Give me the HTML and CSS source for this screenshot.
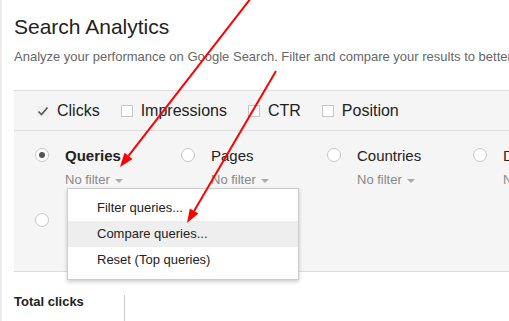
FILE: index.html
```html
<!DOCTYPE html>
<html lang="en">
  <head>
    <meta charset="UTF-8" />
    <title>Search Analytics</title>
    <link rel="stylesheet" href="styles.css">
  </head>
  <body>
    <div class="page">
      <h1>Search Analytics</h1>
      <p class="intro">Analyze your performance on Google Search. Filter and compare your results to better understand your traffic.</p>

      <div class="panel">
        <div class="metrics">
          <label class="metric">
            <span class="check checked">
              <svg width="12" height="12" viewBox="0 0 12 12"><path d="M1.5 6.5 L4.5 9.5 L10.5 2.5" fill="none" stroke="#555" stroke-width="1.6"/></svg>
            </span>Clicks
          </label>
          <label class="metric"><span class="check"></span>Impressions</label>
          <label class="metric"><span class="check"></span>CTR</label>
          <label class="metric"><span class="check"></span>Position</label>
        </div>

        <div class="groups">
          <div class="group-row">
            <div class="option">
              <span class="radio selected"></span>
              <div>
                <div class="option-name bold">Queries</div>
                <div class="filter">No filter<span class="caret"></span></div>
              </div>
            </div>
            <div class="option">
              <span class="radio"></span>
              <div>
                <div class="option-name">Pages</div>
                <div class="filter">No filter<span class="caret"></span></div>
              </div>
            </div>
            <div class="option">
              <span class="radio"></span>
              <div>
                <div class="option-name">Countries</div>
                <div class="filter">No filter<span class="caret"></span></div>
              </div>
            </div>
            <div class="option">
              <span class="radio"></span>
              <div>
                <div class="option-name">Devices</div>
                <div class="filter">No filter<span class="caret"></span></div>
              </div>
            </div>
          </div>
          <div class="group-row second">
            <div class="option">
              <span class="radio"></span>
            </div>
          </div>
        </div>
      </div>

      <div class="totals">
        <div class="total">Total clicks</div>
        <div class="total-chart"></div>
      </div>

      <ul class="menu">
        <li>Filter queries...</li>
        <li class="hover">Compare queries...</li>
        <li>Reset (Top queries)</li>
      </ul>

      <svg class="arrows" width="509" height="321" viewBox="0 0 509 321">
        <line x1="249" y1="-2" x2="126.5" y2="155.9" stroke="#f00" stroke-width="2"/>
        <polygon points="118,167 130.5,158.9 122.5,152.8" fill="#f00"/>
        <line x1="274" y1="71" x2="192.1" y2="210.9" stroke="#f00" stroke-width="2"/>
        <polygon points="185,223 196.4,213.4 187.8,208.4" fill="#f00"/>
      </svg>
    </div>
  </body>
</html>
```

FILE: styles.css
```css
body {
  margin: 0;
  font-family: "Liberation Sans", Arial, sans-serif;
  color: #222;
  background: #fff;
  overflow: hidden;
}
.page {
  position: relative;
  width: 509px;
  height: 321px;
  box-sizing: border-box;
  border-left: 2px solid #ececec;
  padding-left: 12px;
  overflow: hidden;
}
h1 {
  margin: 14px 0 0;
  font-size: 21px;
  line-height: 26px;
  font-weight: normal;
  color: #222;
}
.intro {
  margin: 9px 0 0;
  font-size: 13px;
  line-height: 16px;
  color: #666;
  white-space: nowrap;
}
.panel {
  margin-top: 25px;
  width: 600px;
  background: #f5f5f5;
  border-top: 1px solid #ddd;
  border-bottom: 1px solid #ddd;
}
.metrics {
  display: flex;
  align-items: center;
  height: 39px;
  padding-left: 23px;
  border-bottom: 1px solid #ddd;
  font-size: 16px;
}
.metric {
  display: flex;
  align-items: center;
  margin-right: 21px;
}
.check {
  display: inline-block;
  width: 12px;
  height: 12px;
  margin-right: 8px;
  background: #fff;
  border: 1px solid #c6c6c6;
  box-sizing: border-box;
}
.check.checked {
  border: none;
  background: #f0f0f0;
  margin-right: 8px;
}
.check svg {
  display: block;
}
.groups {
  height: 140px;
  padding-left: 21px;
}
.group-row {
  display: flex;
  padding-top: 16px;
}
.group-row.second {
  padding-top: 24px;
}
.option {
  display: flex;
  width: 146px;
  flex-shrink: 0;
}
.radio {
  width: 14px;
  height: 14px;
  margin-top: 1px;
  margin-right: 16px;
  border: 1px solid #c8c8c8;
  border-radius: 50%;
  background: #fff;
  box-sizing: border-box;
  position: relative;
  flex-shrink: 0;
}
.radio.selected::after {
  content: "";
  position: absolute;
  left: 3px;
  top: 3px;
  width: 6px;
  height: 6px;
  border-radius: 50%;
  background: #555;
}
.option-name {
  font-size: 15px;
  line-height: 17px;
}
.bold {
  font-weight: bold;
}
.filter {
  margin-top: 8px;
  font-size: 13px;
  line-height: 16px;
  color: #888;
}
.caret {
  display: inline-block;
  margin-left: 5px;
  vertical-align: middle;
  border-left: 4px solid transparent;
  border-right: 4px solid transparent;
  border-top: 4px solid #aaa;
}
.totals {
  display: flex;
  margin-top: 23px;
}
.total {
  width: 110px;
  margin-top: -1px;
  font-size: 13px;
  font-weight: bold;
}
.total-chart {
  border-left: 1px solid #ccc;
  height: 40px;
}
.menu {
  position: absolute;
  left: 65px;
  top: 188px;
  width: 232px;
  margin: 0;
  padding: 6px 0;
  list-style: none;
  box-sizing: border-box;
  background: #fff;
  border: 1px solid #ccc;
  box-shadow: 0 2px 4px rgba(0, 0, 0, 0.2);
  font-size: 13px;
  color: #222;
}
.menu li {
  height: 26px;
  line-height: 26px;
  padding-left: 29px;
}
.menu li.hover {
  background: #eee;
}
.arrows {
  position: absolute;
  left: 0;
  top: 0;
}
```
